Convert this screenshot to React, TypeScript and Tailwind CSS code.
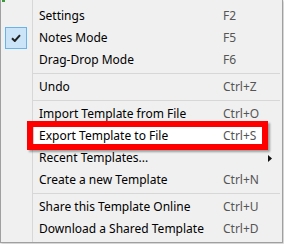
type Item =
  | { kind: "sep" }
  | { kind: "item"; label: string; key?: string; checked?: boolean; sub?: boolean; hot?: boolean };

const items: Item[] = [
  { kind: "item", label: "Settings", key: "F2" },
  { kind: "item", label: "Notes Mode", key: "F5", checked: true },
  { kind: "item", label: "Drag-Drop Mode", key: "F6" },
  { kind: "sep" },
  { kind: "item", label: "Undo", key: "Ctrl+Z" },
  { kind: "sep" },
  { kind: "item", label: "Import Template from File", key: "Ctrl+O" },
  { kind: "item", label: "Export Template to File", key: "Ctrl+S", hot: true },
  { kind: "item", label: "Recent Templates...", sub: true },
  { kind: "item", label: "Create a new Template", key: "Ctrl+N" },
  { kind: "sep" },
  { kind: "item", label: "Share this Template Online", key: "Ctrl+U" },
  { kind: "item", label: "Download a Shared Template", key: "Ctrl+D" },
];

function Gutter({ h, children }: { h: string; children?: React.ReactNode }) {
  return <div className={`flex w-[32px] shrink-0 items-center border-r border-[#d7d7d7] ${h}`}>{children}</div>;
}

function Check() {
  return (
    <div className="ml-[4px] flex h-[22px] w-[22px] items-center justify-center border border-[#68b4e8] bg-[#cce4f7]">
      <svg width="10" height="8" viewBox="0 0 10 8">
        <path d="M1 4.2 L3.8 7 L9 1.2" fill="none" stroke="#222" strokeWidth="2" />
      </svg>
    </div>
  );
}

function Row({ item }: { item: Item }) {
  if (item.kind === "sep") {
    return (
      <div className="flex">
        <Gutter h="h-[5px]" />
        <div className="flex flex-1 items-center pr-[2px]">
          <div className="h-px w-full bg-[#d7d7d7]" />
        </div>
      </div>
    );
  }
  return (
    <div className="flex">
      <Gutter h="h-[22px]">{item.checked && <Check />}</Gutter>
      <div
        className={`flex h-[22px] flex-1 items-center ${
          item.hot ? "mr-[19px] bg-white shadow-[inset_0_0_0_1px_#cccccc]" : ""
        }`}
      >
        <span className="w-[190px] shrink-0 pl-[6px] text-black">{item.label}</span>
        {item.key && <span className="text-[#555]">{item.key}</span>}
        {item.sub && (
          <svg className="ml-[45px]" width="4" height="7" viewBox="0 0 4 7">
            <path d="M0 0 L4 3.5 L0 7 Z" fill="#111" />
          </svg>
        )}
      </div>
    </div>
  );
}

export default function App() {
  return (
    <div className="relative h-[244px] w-[284px] bg-[#f7f7f7] font-['Noto_Sans',sans-serif] text-[12px] leading-none">
      <div className="h-[243px] w-[283px] border-x border-b border-[#a0a0a0] bg-[#f0f0f0] shadow-[1px_1px_2px_rgba(0,0,0,0.2)]">
        <div className="flex">
          <Gutter h="h-[5px]" />
        </div>
        {items.map((it, i) => (
          <Row key={i} item={it} />
        ))}
        <div className="flex">
          <Gutter h="h-[2px]" />
        </div>
      </div>

      {/* red annotation frame */}
      <div className="absolute left-[27px] top-[121px] h-[29px] w-[241px] border-[6px] border-[#ff0000] shadow-[2px_2px_2px_rgba(0,0,0,0.35)]" />

      {/* sliver of the window behind */}
      <div className="absolute left-[2px] top-0 h-[2px] w-[3px] bg-[#3c9a3c]" />
    </div>
  );
}
